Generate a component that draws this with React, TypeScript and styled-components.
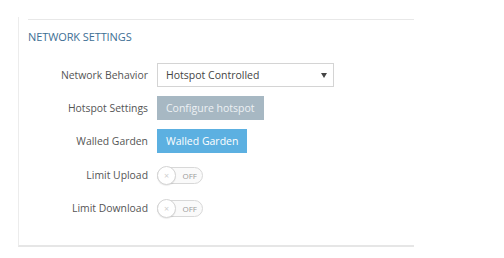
import styled, { createGlobalStyle } from "styled-components";

const GlobalStyle = createGlobalStyle`
  html, body {
    margin: 0;
    padding: 0;
    background: #ffffff;
  }
  body {
    font-family: "Open Sans", "Liberation Sans", sans-serif;
    color: #555;
  }
`;

const Panel = styled.div`
  margin: 17px 0 0 18px;
  width: 396px;
  height: 230px;
  border-left: 1px solid #ececec;
  border-bottom: 2px solid #e6e6e6;
  box-sizing: border-box;
  display: flex;
  flex-direction: column;
`;

const Body = styled.div`
  margin: 2px 0 0 9px;
  border-top: 1px solid #e8e8e8;
  display: flex;
  flex-direction: column;
`;

const Title = styled.h3`
  margin: 9px 0 0;
  font-size: 11px;
  line-height: 15px;
  font-weight: 400;
  color: #3d6f94;
  letter-spacing: -0.1px;
`;

const Form = styled.div`
  margin-top: 19px;
  display: flex;
  flex-direction: column;
  gap: 9px;
`;

const Row = styled.div<{ $h?: number }>`
  display: grid;
  grid-template-columns: 120px auto;
  column-gap: 9px;
  align-items: center;
  height: ${(p) => p.$h ?? 24}px;
`;

const Label = styled.span`
  text-align: right;
  font-size: 10.4px;
  color: #555;
  white-space: nowrap;
`;

const Select = styled.div`
  width: 177px;
  height: 24px;
  box-sizing: border-box;
  border: 1px solid #d4d4d4;
  display: flex;
  align-items: center;
  justify-content: space-between;
  padding: 0 6px 0 8px;
  font-size: 10.5px;
  color: #444;
`;

const Arrow = styled.span`
  width: 0;
  height: 0;
  border-left: 3px solid transparent;
  border-right: 3px solid transparent;
  border-top: 5px solid #444;
`;

const Button = styled.button<{ $tone: "muted" | "primary" }>`
  justify-self: start;
  height: 24px;
  border: none;
  padding: 0 9px;
  font-family: inherit;
  font-size: 10.5px;
  color: ${(p) => (p.$tone === "muted" ? "#edf1f4" : "#ffffff")};
  background: ${(p) => (p.$tone === "muted" ? "#a7b8c3" : "#5cb0e1")};
`;

const Toggle = styled.div`
  justify-self: start;
  position: relative;
  width: 46px;
  height: 17px;
  box-sizing: border-box;
  border: 1px solid #d8d8d8;
  border-radius: 9px;
  background: #fafafa;
  display: flex;
  align-items: center;
  justify-content: flex-end;
  padding-right: 5px;
  font-size: 8px;
  color: #9a9a9a;
`;

const Knob = styled.span`
  position: absolute;
  left: -1px;
  top: -2px;
  width: 19px;
  height: 19px;
  box-sizing: border-box;
  border-radius: 50%;
  background: #fff;
  border: 1px solid #d4d4d4;
  box-shadow: 0 1px 1px rgba(0, 0, 0, 0.08);
  display: flex;
  align-items: center;
  justify-content: center;
  font-size: 9px;
  color: #cfcfcf;
  line-height: 1;
`;

function Switch() {
  return (
    <Toggle>
      <Knob>×</Knob>
      OFF
    </Toggle>
  );
}

export default function App() {
  return (
    <>
      <GlobalStyle />
      <Panel>
        <Body>
          <Title>NETWORK SETTINGS</Title>
          <Form>
            <Row>
              <Label>Network Behavior</Label>
              <Select>
                Hotspot Controlled
                <Arrow />
              </Select>
            </Row>
            <Row>
              <Label>Hotspot Settings</Label>
              <Button $tone="muted">Configure hotspot</Button>
            </Row>
            <Row>
              <Label>Walled Garden</Label>
              <Button $tone="primary">Walled Garden</Button>
            </Row>
            <Row $h={26}>
              <Label>Limit Upload</Label>
              <Switch />
            </Row>
            <Row $h={22}>
              <Label>Limit Download</Label>
              <Switch />
            </Row>
          </Form>
        </Body>
      </Panel>
    </>
  );
}
